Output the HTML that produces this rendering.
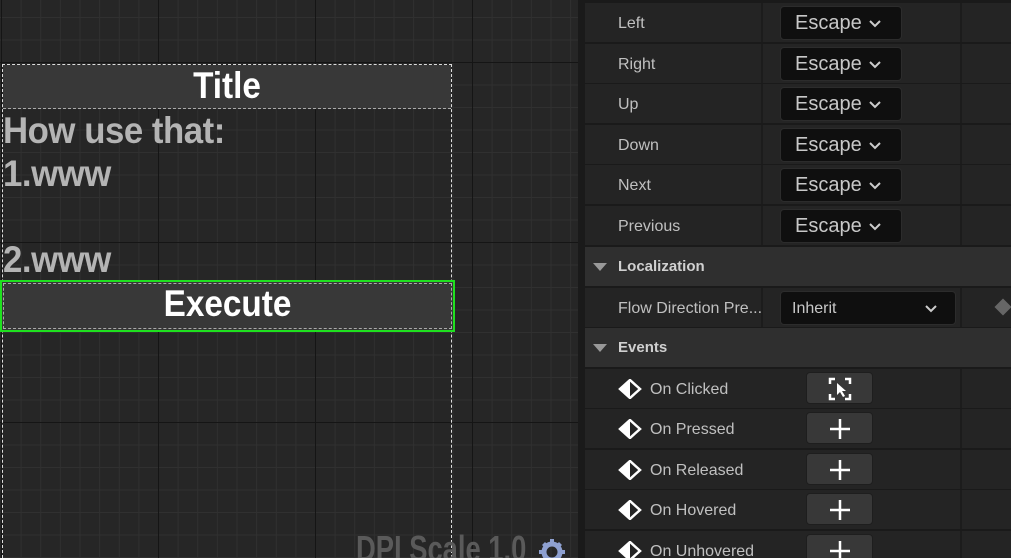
<!DOCTYPE html>
<html><head><meta charset="utf-8"><style>
*{margin:0;padding:0;box-sizing:border-box}
html,body{width:1011px;height:558px;overflow:hidden}
body{background:#1a1a1a;font-family:"Liberation Sans",sans-serif;position:relative}
#canvas{position:absolute;left:0;top:0;width:578px;height:558px;overflow:hidden;background-color:#262626;
background-image:
linear-gradient(to right,#151515 1px,transparent 1px),
linear-gradient(to bottom,#151515 1px,transparent 1px),
linear-gradient(to right,#303030 1px,transparent 1px),
linear-gradient(to bottom,#303030 1px,transparent 1px);
background-size:157px 180px,157px 180px,19.625px 22.5px,19.625px 22.5px;
background-position:1px 62px,1px 62px,1px 62px,1px 62px}
.box{position:absolute;border:1px dashed #ddd}
.txt{position:absolute;left:3px;color:#b4b4b4;font-weight:bold;font-size:37px;transform:scaleX(0.94);transform-origin:0 0;letter-spacing:-0.5px}
#panel{position:absolute;left:585px;top:0;width:426px;height:558px;background:#1a1a1a;overflow:hidden}
.row{position:absolute;left:0;width:426px;height:38.5px;background:#242424}
.row .l{position:absolute;left:33px;top:2px;line-height:38px;color:#c0c0c0;font-size:16px}
.row .d1{position:absolute;left:176px;top:0;width:2px;height:100%;background:#1c1c1c}
.row .d2{position:absolute;left:375px;top:0;width:2px;height:100%;background:#1c1c1c}
.dd{position:absolute;left:195px;top:3px;width:122px;height:34px;background:#0f0f0f;border:1px solid #2c2c2c;border-radius:4px;color:#c8c8c8;font-size:20px;line-height:33px;padding-left:14px}
.dd svg{position:absolute;right:20px;top:13px}
.hdr{position:absolute;left:0;width:426px;height:38.5px;background:#2f2f2f;color:#d0d0d0;font-weight:bold;font-size:15px;line-height:40px;padding-left:33px}
.hdr:before{content:"";position:absolute;left:8px;top:16px;border-left:7px solid transparent;border-right:7px solid transparent;border-top:8px solid #999}
.btn{position:absolute;left:221px;top:3px;width:67px;height:32px;background:#383838;border:1px solid #1e1e1e;border-radius:4px}
.ev{position:absolute;left:33px;top:10px}
.row .e{left:65px}
</style></head><body>
<div id="canvas">
 <div class="box" style="left:2px;top:64px;width:450px;height:494px;border-bottom:none"></div>
 <div style="position:absolute;left:3px;top:65px;width:448px;height:44px;background:#383838;border-bottom:1px dashed #aaa"></div>
 <div style="position:absolute;left:3px;top:65px;width:448px;height:44px;color:#fff;font-weight:bold;font-size:37px;text-align:center;line-height:42px;transform:scaleX(0.9)">Title</div>
 <div class="txt" style="top:110px">How use that:</div>
 <div class="txt" style="top:153px">1.www</div>
 <div class="txt" style="top:239px">2.www</div>
 <div style="position:absolute;left:0;top:280px;width:455px;height:52px;border:2px solid #1fe01f;background:#383838"><div style="position:absolute;left:1px;top:1px;right:1px;bottom:1px;border:1px dashed #aaa"></div></div>
 <div style="position:absolute;left:0;top:280px;width:455px;height:52px;color:#fff;font-weight:bold;font-size:37px;text-align:center;line-height:48px;transform:scaleX(0.9)">Execute</div>
 <div style="position:absolute;left:356px;top:528px;color:#5a5a5a;font-weight:bold;font-size:36px;transform:scaleX(0.76);transform-origin:0 0;white-space:nowrap">DPI Scale 1.0</div>
 <svg style="position:absolute;left:538px;top:538px" width="28" height="28" viewBox="0 0 28 28"><circle cx="14" cy="14" r="8" fill="none" stroke="#8ea0d0" stroke-width="5"/><path d="M12 1h4v5h-4zM12 22h4v5h-4zM1 12h5v4H1zM22 12h5v4h-5zM4 7l3-3 4 4-3 3zM21 4l3 3-4 4-3-3z" fill="#8ea0d0"/></svg>
</div>
<div id="panel">
 <div class="row" style="top:3px"><span class="l">Left</span><div class="d1"></div><div class="d2"></div><div class="dd">Escape<svg width="12" height="8"><path d="M1 1L6 6L11 1" stroke="#ccc" stroke-width="2" fill="none"/></svg></div></div>
 <div class="row" style="top:44px"><span class="l">Right</span><div class="d1"></div><div class="d2"></div><div class="dd">Escape<svg width="12" height="8"><path d="M1 1L6 6L11 1" stroke="#ccc" stroke-width="2" fill="none"/></svg></div></div>
 <div class="row" style="top:84px"><span class="l">Up</span><div class="d1"></div><div class="d2"></div><div class="dd">Escape<svg width="12" height="8"><path d="M1 1L6 6L11 1" stroke="#ccc" stroke-width="2" fill="none"/></svg></div></div>
 <div class="row" style="top:125px"><span class="l">Down</span><div class="d1"></div><div class="d2"></div><div class="dd">Escape<svg width="12" height="8"><path d="M1 1L6 6L11 1" stroke="#ccc" stroke-width="2" fill="none"/></svg></div></div>
 <div class="row" style="top:165px"><span class="l">Next</span><div class="d1"></div><div class="d2"></div><div class="dd">Escape<svg width="12" height="8"><path d="M1 1L6 6L11 1" stroke="#ccc" stroke-width="2" fill="none"/></svg></div></div>
 <div class="row" style="top:206px"><span class="l">Previous</span><div class="d1"></div><div class="d2"></div><div class="dd">Escape<svg width="12" height="8"><path d="M1 1L6 6L11 1" stroke="#ccc" stroke-width="2" fill="none"/></svg></div></div>
 <div class="hdr" style="top:247px">Localization</div>
 <div class="row" style="top:288px"><span class="l">Flow Direction Pre...</span><div class="d1"></div><div class="d2"></div><div class="dd" style="width:176px;font-size:16px;padding-left:11px">Inherit<svg width="12" height="8" style="right:18px"><path d="M1 1L6 6L11 1" stroke="#ccc" stroke-width="2" fill="none"/></svg></div><div style="position:absolute;left:412px;top:13px;width:12px;height:12px;background:#666;transform:rotate(45deg)"></div></div>
 <div class="hdr" style="top:328px">Events</div>
 <div class="row" style="top:369px"><svg class="ev" width="24" height="20" viewBox="0 0 24 20"><path d="M12 1L22 10L12 19L2 10Z" fill="none" stroke="#fff" stroke-width="2.5"/><path d="M2 10L12 1L12 19Z" fill="#fff"/></svg><span class="l e">On Clicked</span><div class="d2"></div><div class="btn"><svg style="position:absolute;left:21px;top:4px" width="24" height="24" viewBox="0 0 24 24"><path d="M2 7V2H7M17 2H22V7M22 17V22H17M7 22H2V17" fill="none" stroke="#fff" stroke-width="2.5"/><path d="M9 6L9 18L12 15L15 20L17 19L14 14L18 14Z" fill="#fff"/></svg></div></div>
 <div class="row" style="top:409px"><svg class="ev" width="24" height="20" viewBox="0 0 24 20"><path d="M12 1L22 10L12 19L2 10Z" fill="none" stroke="#fff" stroke-width="2.5"/><path d="M2 10L12 1L12 19Z" fill="#fff"/></svg><span class="l e">On Pressed</span><div class="d2"></div><div class="btn"><svg style="position:absolute;left:23px;top:6px" width="20" height="20"><path d="M10 0V20M0 10H20" stroke="#fff" stroke-width="2.5"/></svg></div></div>
 <div class="row" style="top:450px"><svg class="ev" width="24" height="20" viewBox="0 0 24 20"><path d="M12 1L22 10L12 19L2 10Z" fill="none" stroke="#fff" stroke-width="2.5"/><path d="M2 10L12 1L12 19Z" fill="#fff"/></svg><span class="l e">On Released</span><div class="d2"></div><div class="btn"><svg style="position:absolute;left:23px;top:6px" width="20" height="20"><path d="M10 0V20M0 10H20" stroke="#fff" stroke-width="2.5"/></svg></div></div>
 <div class="row" style="top:490px"><svg class="ev" width="24" height="20" viewBox="0 0 24 20"><path d="M12 1L22 10L12 19L2 10Z" fill="none" stroke="#fff" stroke-width="2.5"/><path d="M2 10L12 1L12 19Z" fill="#fff"/></svg><span class="l e">On Hovered</span><div class="d2"></div><div class="btn"><svg style="position:absolute;left:23px;top:6px" width="20" height="20"><path d="M10 0V20M0 10H20" stroke="#fff" stroke-width="2.5"/></svg></div></div>
 <div class="row" style="top:531px"><svg class="ev" width="24" height="20" viewBox="0 0 24 20"><path d="M12 1L22 10L12 19L2 10Z" fill="none" stroke="#fff" stroke-width="2.5"/><path d="M2 10L12 1L12 19Z" fill="#fff"/></svg><span class="l e">On Unhovered</span><div class="d2"></div><div class="btn"><svg style="position:absolute;left:23px;top:6px" width="20" height="20"><path d="M10 0V20M0 10H20" stroke="#fff" stroke-width="2.5"/></svg></div></div>
</div>
</body></html>
